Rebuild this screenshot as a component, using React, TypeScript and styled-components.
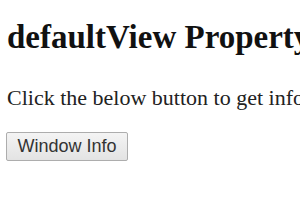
import React from "react";
import styled, { createGlobalStyle } from "styled-components";

const Global = createGlobalStyle`
  html, body { margin: 0; padding: 0; background: #ffffff; }
  body { font-family: "Liberation Serif", "Times New Roman", serif; color: #000; }
`;

const Page = styled.div`
  padding: 0 0 0 7px;
  width: 300px;
  height: 210px;
  overflow: hidden;
  box-sizing: border-box;
`;

const Title = styled.h2`
  margin: 19px 0 0 0;
  font-size: 33px;
  font-weight: bold;
  line-height: 36px;
  white-space: nowrap;
  color: #111;
`;

const Text = styled.p`
  margin: 31px 0 0 0;
  font-size: 22px;
  line-height: 24px;
  white-space: nowrap;
  color: #222;
`;

const Button = styled.button`
  display: block;
  margin: 22px 0 0 -1px;
  width: 122px;
  height: 29px;
  padding: 0;
  font-family: "Liberation Sans", Arial, sans-serif;
  font-size: 18px;
  color: #333;
  background: linear-gradient(#f4f4f4, #e3e3e3);
  border: 1px solid #adadad;
  border-radius: 2px;
`;

export default function App() {
  return (
    <Page>
      <Global />
      <Title>defaultView Property</Title>
      <Text>Click the below button to get info</Text>
      <Button>Window Info</Button>
    </Page>
  );
}
